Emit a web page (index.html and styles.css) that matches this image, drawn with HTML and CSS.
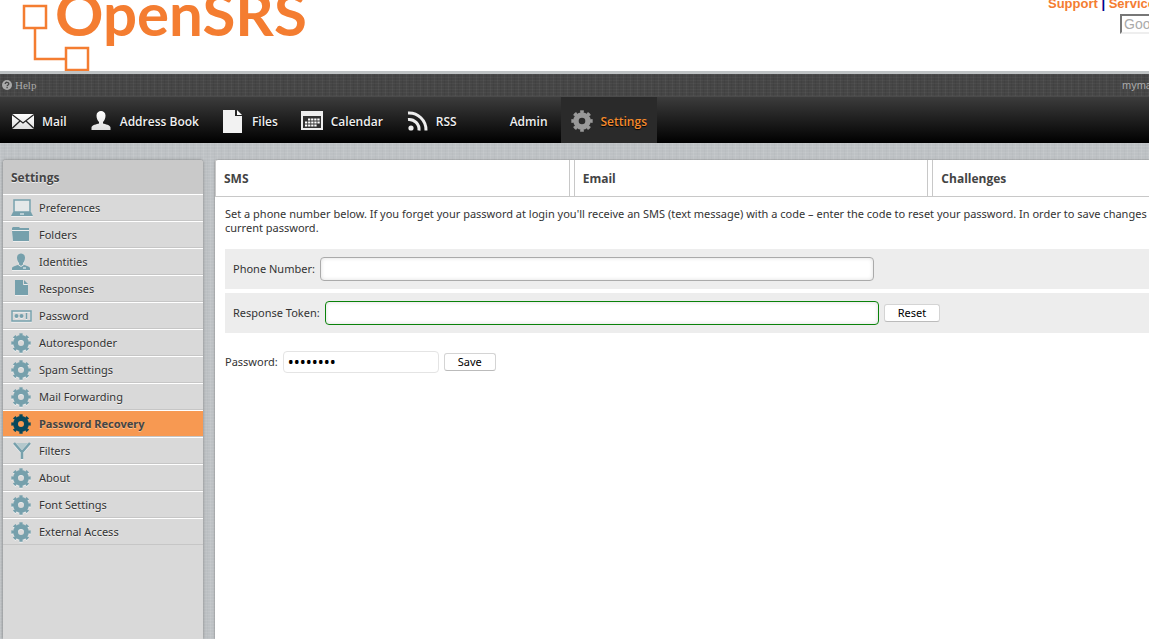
FILE: index.html
```html
<!DOCTYPE html>
<html lang="en">
<head>
    <meta charset="UTF-8">
    <meta name="viewport" content="width=device-width, initial-scale=1.0">
    <title>OpenSRS Webmail - Password Recovery</title>
    <link rel="stylesheet" href="styles.css">
</head>
<body>
    <svg class="sprite" aria-hidden="true">
        <defs>
            <linearGradient id="white-fade" x1="0" y1="0" x2="0" y2="1">
                <stop offset="0" stop-color="#fff"/>
                <stop offset="1" stop-color="#ddd"/>
            </linearGradient>
            <symbol id="gear" viewBox="0 0 22 22">
                <g fill="none" stroke="currentColor">
                    <circle cx="11" cy="11" r="6" stroke-width="5.4"/>
                    <circle cx="11" cy="11" r="9.2" stroke-width="3" pathLength="16" stroke-dasharray="1 1" stroke-dashoffset="0.5"/>
                </g>
            </symbol>
        </defs>
    </svg>
    <div class="page">
        <header class="brand">
            <svg class="logo" width="320" height="71" viewBox="0 0 320 71" role="img" aria-label="OpenSRS">
                <g fill="none" stroke="#f47d31" stroke-width="2.5">
                    <rect x="24" y="6" width="22" height="22"/>
                    <path d="M35 28v31h31"/>
                    <rect x="66" y="48" width="22" height="22"/>
                </g>
                <text class="logo-text" x="55" y="36">OpenSRS</text>
            </svg>
            <div class="brand-right">
                <div class="brand-links">
                    <a href="#">Support</a> | <a href="#">Services</a> | <a href="#">Contact Us</a>
                </div>
                <input type="text" class="google" aria-label="Search" placeholder="Google Custom Search">
            </div>
        </header>
        <div class="topbar">
            <a href="#" class="help">
                <svg width="10" height="10" viewBox="0 0 10 10">
                    <circle cx="5" cy="5" r="5" fill="#aaa"/>
                    <path d="M3.2 4c0-2.4 3.7-2.2 3.6 0C6.800 5 5.200 5 5.100 6.200M5.100 7v1.200" fill="none" stroke="#444" stroke-width="1.300"/>
                </svg>
                Help
            </a>
            <span class="account">mymail@example.com</span>
        </div>
        <nav class="nav">
            <a href="#">
                <svg width="22" height="22" viewBox="0 0 22 22">
                    <rect y="4" width="22" height="15" fill="url(#white-fade)"/>
                    <path d="M0 4.500l11 8.500 11-8.500M0 18.500l8-7.500M22 18.500l-8-7.500" fill="none" stroke="#222" stroke-width="1.300"/>
                </svg>
                Mail
            </a>
            <a href="#">
                <svg width="22" height="22" viewBox="0 0 22 22">
                    <path d="M6.500 5.500C6.500-.5 15.500-.5 15.500 5.500c0 3-1 5-2.500 6.500v1.500c2 .8 7.500 1.500 7.500 4V20h-19v-2.500c0-2.500 5.500-3.200 7.500-4V12C7.500 10.500 6.500 8.500 6.500 5.500z" fill="url(#white-fade)"/>
                </svg>
                Address Book
            </a>
            <a href="#">
                <svg width="22" height="24" viewBox="0 0 22 24">
                    <path d="M1 1h12v6h7v17H1z" fill="#f2f2f2"/>
                    <path d="M15 1l5 5h-5z" fill="#fff"/>
                </svg>
                Files
            </a>
            <a href="#">
                <svg width="22" height="22" viewBox="0 0 22 22">
                    <rect x="1" y="2" width="20" height="17" fill="#333" stroke="#eee" stroke-width="2"/>
                    <rect x="1" y="1" width="20" height="5" fill="#eee"/>
                    <path d="M7 9.500h12M4 12.500h15M4 15.500h12" stroke="#fff" stroke-width="2" stroke-dasharray="2.300 .8"/>
                </svg>
                Calendar
            </a>
            <a href="#">
                <svg width="22" height="22" viewBox="0 0 22 22">
                    <circle cx="5" cy="18" r="2.600" fill="#eee"/>
                    <path d="M2 9.500A10 10 0 0 1 13 20.500M2 3A17 17 0 0 1 20 20.500" fill="none" stroke="#eee" stroke-width="3"/>
                </svg>
                RSS
            </a>
            <a href="#"><span class="no-icon"></span>Admin</a>
            <a href="#" class="active">
                <svg width="22" height="22"><use href="#gear"/></svg>
                Settings
            </a>
        </nav>
        <div class="content">
            <aside class="sidebar">
                <h2>Settings</h2>
                <ul>
                    <li><a href="#">
                        <svg width="22" height="20" viewBox="0 0 22 20">
                            <path d="M3 2h16v12H3z" fill="#e4e8e9" stroke="currentColor" stroke-width="1.500"/>
                            <path d="M2 14h18l2 4H0z" fill="currentColor"/>
                            <path d="M9 16h4" stroke="#fff"/>
                        </svg>
                        Preferences
                    </a></li>
                    <li><a href="#">
                        <svg width="22" height="20" viewBox="0 0 22 20">
                            <path d="M2 2h6l1 1h9v2H1V3z" fill="currentColor"/>
                            <path d="M1 6h17v10H2z" fill="currentColor"/>
                        </svg>
                        Folders
                    </a></li>
                    <li><a href="#">
                        <svg width="22" height="20" viewBox="0 0 22 20">
                            <path d="M6 5.500C6 0 14 0 14 5.500c0 3-1 4.500-2 5.500v1.500l-2 1.500-2-1.500V11C7 10 6 8.500 6 5.500z" fill="currentColor"/>
                            <path d="M7 13l3 2 3-2c3 1 6 1.500 6 3.500V18H1v-1.500C1 14.500 4 14 7 13z" fill="currentColor"/>
                            <path d="M12 16h3" stroke="#fff"/>
                        </svg>
                        Identities
                    </a></li>
                    <li><a href="#">
                        <svg width="22" height="20" viewBox="0 0 22 20">
                            <path d="M4 1h8v5h5v10H4z" fill="currentColor"/>
                            <path d="M13 1l4 4h-4z" fill="currentColor"/>
                        </svg>
                        Responses
                    </a></li>
                    <li><a href="#">
                        <svg width="22" height="20" viewBox="0 0 22 20">
                            <rect x="1" y="5" width="19" height="10" fill="none" stroke="currentColor" stroke-width="1.500"/>
                            <circle cx="5.500" cy="10" r="2" fill="currentColor"/>
                            <circle cx="10.500" cy="10" r="2" fill="currentColor"/>
                            <path d="M15.500 7v6" stroke="currentColor" stroke-width="1.500"/>
                        </svg>
                        Password
                    </a></li>
                    <li><a href="#"><svg width="20" height="20"><use href="#gear"/></svg>Autoresponder</a></li>
                    <li><a href="#"><svg width="20" height="20"><use href="#gear"/></svg>Spam Settings</a></li>
                    <li><a href="#"><svg width="20" height="20"><use href="#gear"/></svg>Mail Forwarding</a></li>
                    <li class="current"><a href="#"><svg width="20" height="20"><use href="#gear"/></svg>Password Recovery</a></li>
                    <li><a href="#">
                        <svg width="22" height="20" viewBox="0 0 22 20">
                            <path d="M5 2h12l-6 7z" fill="#b4c8cc"/>
                            <path d="M3 2l8 9 8-9M11 10v8" fill="none" stroke="currentColor" stroke-width="2.500"/>
                        </svg>
                        Filters
                    </a></li>
                    <li><a href="#"><svg width="20" height="20"><use href="#gear"/></svg>About</a></li>
                    <li><a href="#"><svg width="20" height="20"><use href="#gear"/></svg>Font Settings</a></li>
                    <li><a href="#"><svg width="20" height="20"><use href="#gear"/></svg>External Access</a></li>
                </ul>
            </aside>
            <main class="panel">
                <div class="tabs">
                    <a href="#">SMS</a>
                    <a href="#">Email</a>
                    <a href="#">Challenges</a>
                </div>
                <form class="recovery">
                    <p>Set a phone number below. If you forget your password at login you'll receive an SMS (text message) with a code – enter the code to reset your password. In order to save changes you must enter your<br>current password.</p>
                    <div class="field-row">
                        <label for="phone">Phone Number:</label>
                        <input type="text" id="phone" name="phone">
                    </div>
                    <div class="field-row">
                        <label for="token">Response Token:</label>
                        <input type="text" id="token" name="token" class="valid">
                        <button type="button">Reset</button>
                    </div>
                    <div class="save-row">
                        <label for="password">Password:</label>
                        <input type="password" id="password" name="password" value="password">
                        <button type="submit">Save</button>
                    </div>
                </form>
            </main>
        </div>
    </div>
</body>
</html>
```
FILE: styles.css
```css
* {
    box-sizing: border-box;
}
body {
    margin: 0;
    overflow: hidden;
    background-color: #fff;
    color: #333;
    font-family: "Lucida Grande", "Noto Sans", sans-serif;
    font-size: 11px;
}
a {
    color: inherit;
    text-decoration: none;
}
svg {
    flex: none;
}
.sprite {
    display: block;
    width: 0;
    height: 0;
}
.page {
    display: flex;
    flex-direction: column;
    min-width: 1287px;
    height: 100vh;
}

/* logo and links */
.brand {
    display: flex;
    justify-content: space-between;
    height: 71px;
}
.logo-text {
    fill: #f47d31;
    font-family: Lato, sans-serif;
    font-size: 60px;
    font-weight: bold;
}
.brand-right {
    width: 239px;
    color: #00008b;
    font: bold 13px/16px "Liberation Sans", Arial, sans-serif;
    white-space: nowrap;
    margin-top: -4px;
}
.brand-links a {
    color: #f47d31;
}
.google {
    display: block;
    width: 150px;
    height: 20px;
    margin: 2px 0 0 72px;
    padding: 1px 2px;
    border: 2px solid #eee;
    border-top-color: #777;
    border-left-color: #777;
    font: 14px "Liberation Sans", Arial, sans-serif;
}
.google::placeholder {
    color: #aaa;
}

/* dark bars */
.topbar {
    display: flex;
    align-items: center;
    justify-content: space-between;
    height: 26px;
    padding-left: 2px;
    border-top: 3px solid #bfc3c4;
    border-bottom: 1px solid #4a4a4a;
    background:
        repeating-linear-gradient(90deg, rgba(255,255,255,0.04) 0 1px, transparent 1px 3px, rgba(0,0,0,0.06) 3px 4px, transparent 4px 7px),
        repeating-linear-gradient(rgba(255,255,255,0.03) 0 1px, transparent 1px 3px),
        #454545;
    color: #aaa;
}
.help {
    display: flex;
    align-items: center;
    gap: 3px;
    font-family: "Liberation Serif", serif;
}
.account {
    width: 165px;
    font-family: "Liberation Sans", Arial, sans-serif;
}
.nav {
    display: flex;
    gap: 3px;
    height: 46px;
    padding-left: 2px;
    background: linear-gradient(#3c3c3c, #000);
}
.nav a {
    display: flex;
    align-items: center;
    gap: 8px;
    padding: 2px 10px 0;
    color: #f0f0f0;
    font-family: "Lucida Grande", "Open Sans", sans-serif;
    font-size: 12px;
    font-weight: 600;
    text-shadow: 0 1px 1px #000;
}
.no-icon {
    width: 22px;
}
.nav .active {
    background-color: #2a2a2a;
    color: #f58a2c;
}
.nav .active svg {
    color: #999;
}

/* content */
.content {
    display: flex;
    flex: 1;
    gap: 12px;
    padding: 17px 0 0 3px;
    background:
        repeating-linear-gradient(90deg, rgba(255,255,255,0.08) 0 1px, transparent 1px 4px, rgba(0,0,0,0.02) 4px 5px, transparent 5px 7px),
        repeating-linear-gradient(rgba(255,255,255,0.07) 0 1px, transparent 1px 3px),
        #bdc1c4;
}
.sidebar {
    flex: none;
    width: 200px;
    border-radius: 3px 3px 0 0;
    background-color: #d9d9d9;
    box-shadow: 0 0 3px #777;
}
.sidebar h2 {
    margin: 0;
    padding: 2px 0 0 8px;
    border-radius: 3px 3px 0 0;
    background-color: #c9c9c9;
    color: #444;
    font-family: "Lucida Grande", "Open Sans", sans-serif;
    font-size: 12px;
    line-height: 32px;
    text-shadow: 0 1px 0 #eee;
}
.sidebar ul {
    margin: 0;
    padding: 0;
    list-style: none;
}
.sidebar li {
    border-top: 1px solid #fff;
    border-bottom: 1px solid #c6c6c6;
}
.sidebar li a {
    display: grid;
    grid-template-columns: 22px 1fr;
    align-items: center;
    gap: 6px;
    height: 25px;
    padding-left: 8px;
    text-shadow: 0 1px 0 #eee;
}
.sidebar svg {
    color: #76a0ac;
    filter: drop-shadow(0 1px 0 #eee);
}
.sidebar .current {
    background-color: #f79952;
    color: #444;
    font-weight: bold;
}
.sidebar .current a {
    text-shadow: 0 1px 0 #fbc090;
}
.sidebar .current svg {
    color: #08485c;
    filter: none;
}
.panel {
    flex: 1;
    border-radius: 3px 0 0 0;
    background-color: #fff;
    box-shadow: 0 0 2px #777;
}
.tabs {
    display: flex;
    gap: 4px;
    border-bottom: 1px solid #c8c8c8;
}
.tabs a {
    flex: 1;
    padding: 2px 0 0 8px;
    border: solid #c8c8c8;
    border-width: 0 1px;
    color: #444;
    font-family: "Lucida Grande", "Open Sans", sans-serif;
    font-size: 12px;
    font-weight: bold;
    line-height: 34px;
}
.recovery {
    padding: 10px;
}
.recovery p {
    margin: 0 0 14px;
    line-height: 14px;
    white-space: nowrap;
}
.field-row,
.save-row {
    display: flex;
    align-items: center;
    gap: 5px;
}
.field-row {
    height: 40px;
    margin-bottom: 4px;
    padding-left: 8px;
    background-color: #ededed;
}
.field-row label,
.save-row label {
    padding-bottom: 2px;
}
.save-row {
    margin-top: 18px;
}
input {
    font-family: inherit;
    font-size: 11px;
}
.field-row input {
    width: 554px;
    height: 24px;
    border: 1px solid #aaa;
    border-radius: 4px;
    box-shadow: inset 0 0 4px #ddd;
}
.field-row .valid {
    border-color: #0a820a;
}
.save-row input {
    width: 156px;
    height: 22px;
    padding: 0 4px;
    border: 1px solid #e4e4e4;
    border-radius: 4px;
    font-size: 16px;
}
button {
    height: 18px;
    padding: 0 13px;
    border: 1px solid #d4d4d4;
    border-bottom-color: #bbb;
    border-radius: 3px;
    background-color: #fff;
    color: #000;
    font-family: inherit;
    font-size: 11px;
    line-height: 14px;
}
```
